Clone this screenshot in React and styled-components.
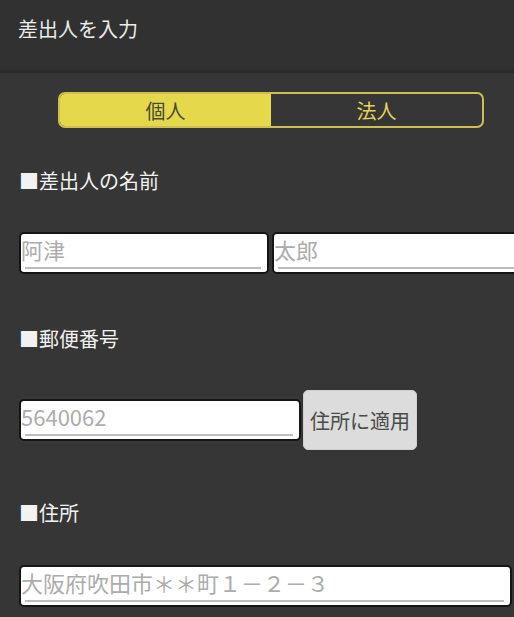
import React from 'react';
import styled, { createGlobalStyle } from 'styled-components';

const GlobalStyle = createGlobalStyle`
  body {
    margin: 0;
    background: #363636;
    overflow: hidden;
    font-family: "Noto Sans CJK JP", "Noto Sans", sans-serif;
  }
`;

const Header = styled.header`
  height: 73px;
  box-sizing: border-box;
  padding: 17px 18px 0;
  background: #313131;
  border-bottom: 3px solid #2b2b2b;
  color: #ececec;
  font-size: 20px;
  line-height: 24px;
`;

const Body = styled.div`
  display: flex;
  flex-direction: column;
  align-items: flex-start;
  padding-left: 19px;
`;

const Segment = styled.div`
  display: flex;
  width: 426px;
  height: 36px;
  box-sizing: border-box;
  margin: 19px 0 0 39px;
  border: 2px solid #cdbf52;
  border-radius: 7px;
  overflow: hidden;
`;

const SegItem = styled.div`
  flex: 1;
  display: flex;
  align-items: center;
  justify-content: center;
  font-size: 20px;
  background: ${p => (p.active ? '#e6d84b' : 'transparent')};
  color: ${p => (p.active ? '#4a4a3a' : '#e2d45a')};
`;

const Label = styled.div`
  margin-top: ${p => p.gap}px;
  color: #f2f2f2;
  font-size: 20px;
  line-height: 28px;
`;

const Row = styled.div`
  display: flex;
  align-items: center;
  gap: ${p => p.gap || 3}px;
  margin-top: ${p => p.top}px;
`;

const Input = styled.input`
  width: ${p => p.w}px;
  height: 42px;
  box-sizing: border-box;
  flex: none;
  margin: 0;
  padding: 0 0 9px 0;
  border: 2px solid #151515;
  border-radius: 5px;
  background-color: #fff;
  background-image: linear-gradient(#bcbcbc, #bcbcbc);
  background-repeat: no-repeat;
  background-size: calc(100% - 10px) 2px;
  background-position: 4px calc(100% - 3px);
  font-family: "Noto Sans CJK JP", "Noto Sans", sans-serif;
  font-size: 22px;
  color: #333;
  outline: none;

  &::placeholder {
    color: #acacac;
  }
`;

const ApplyButton = styled.button`
  width: 114px;
  height: 60px;
  margin: 0;
  padding: 0;
  border: 1px solid #cfcfcf;
  border-radius: 5px;
  background: #dcdcdc;
  color: #4a4a4a;
  font-family: "Noto Sans CJK JP", "Noto Sans", sans-serif;
  font-size: 20px;
`;

export default function App() {
  return (
    <>
      <GlobalStyle />
      <Header>差出人を入力</Header>
      <Body>
        <Segment>
          <SegItem active>個人</SegItem>
          <SegItem>法人</SegItem>
        </Segment>

        <Label gap={39}>■差出人の名前</Label>
        <Row top={37}>
          <Input w={250} placeholder="阿津" />
          <Input w={250} placeholder="太郎" />
        </Row>

        <Label gap={51}>■郵便番号</Label>
        <Row top={37} gap={2}>
          <Input w={282} placeholder="5640062" />
          <ApplyButton>住所に適用</ApplyButton>
        </Row>

        <Label gap={49}>■住所</Label>
        <Row top={38}>
          <Input w={493} placeholder="大阪府吹田市＊＊町１－２－３" />
        </Row>
      </Body>
    </>
  );
}
